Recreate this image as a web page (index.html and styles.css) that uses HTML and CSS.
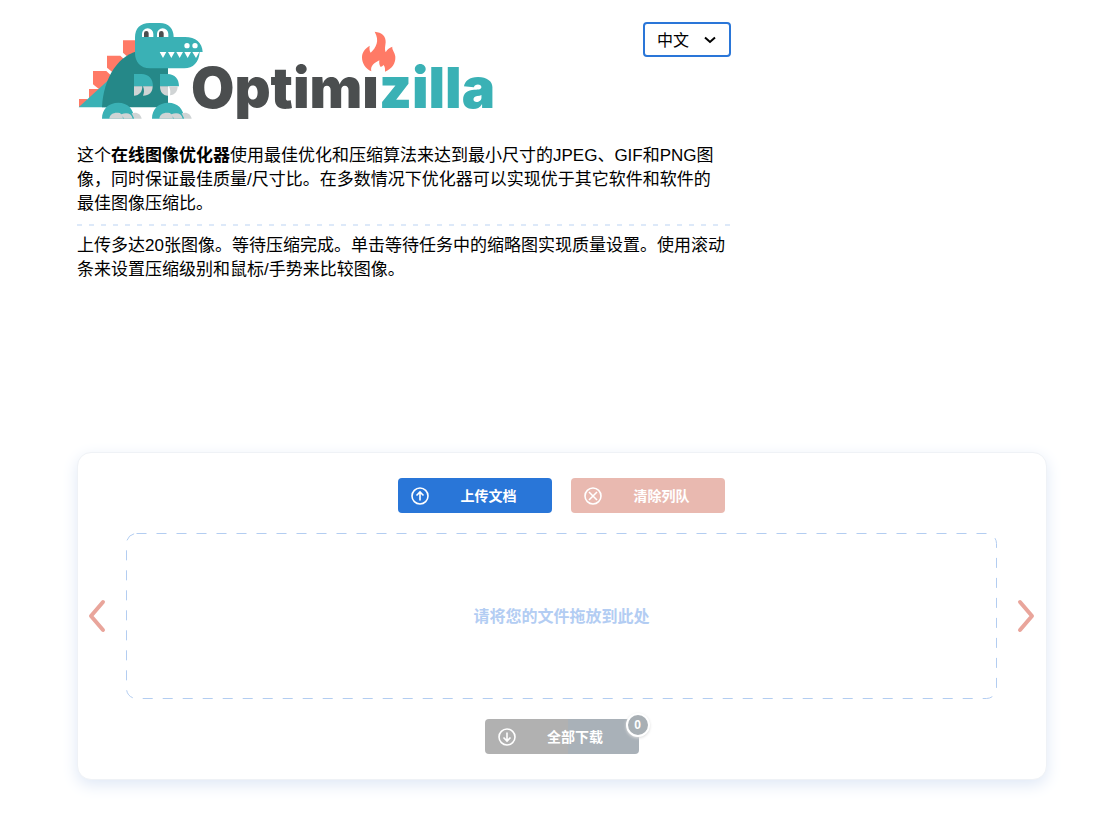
FILE: index.html
```html
<!DOCTYPE html>
<html lang="zh-CN">
<head>
<meta charset="utf-8">
<meta name="viewport" content="width=device-width, initial-scale=1">
<title>Optimizilla</title>
<link rel="stylesheet" href="styles.css">
</head>
<body>
<main class="page">
  <div class="top">
    <div class="intro">
      <header class="header">
        <a class="logo" href="#" aria-label="Optimizilla">
          <svg width="420" height="100" viewBox="77 20 420 100">
            <g transform="translate(70 15) scale(.33333)">
              <g fill="#ff7a66">
                <path d="M159 76h40v55h-20l-20-18z"/>
                <path d="M111 122h40l14 13-30 43-24-20z"/>
                <path d="M69 168h40l15 14-30 46-25-20z"/>
                <path d="M57 222h32v28H57z"/>
                <path d="M27 252h25v24H27z"/>
              </g>
              <path fill="#3ab1b5" d="M26 277 126 185v92z"/>
              <path fill="#258888" d="M96 277C100 190 145 116 215 106l79 30v141z"/>
              <path fill="#3ab1b5" d="M239 24h30c28 0 42 18 42 42h34c32 0 52 17 53 45h-9c-2 31-20 49-46 49H240c-29 0-45-20-45-46V67c0-27 16-43 44-43z"/>
              <path fill="#fff" d="M216 66V57a17 17 0 0 1 34 0v9zM261 66V57a17 17 0 0 1 34 0v9z"/>
              <path fill="#4b4e4f" d="M222 66V55a7 7 0 0 1 14 0v11zM267 66V55a7 7 0 0 1 14 0v11z"/>
              <circle cx="351" cy="92" r="8" fill="#fff"/><circle cx="375" cy="92" r="8" fill="#fff"/>
              <path fill="#fff" d="M269 111h20l-10 18zM294 111h20l-10 18zM319 111h20l-10 18zM343 111h20l-10 18zM367 111h21l-10 18z"/>
              <path fill="#3ab1b5" d="M192 177h22c23 0 35 15 35 37h-57zM270 177h22c23 0 35 15 35 37h-57z"/>
              <path fill="#d0d4d5" d="M192 214h25c0 17-9 28-25 28zM219 214h29c0 18-10 28-29 28 4-9 4-17 0-28zM270 214h24v28c-16 0-24-11-24-28zM297 214h26c0 15-8 26-23 27 2-9 1-17-3-27z"/>
              <path fill="#3ab1b5" d="M96 311c0-29 20-48 49-48 28 0 46 19 48 48zM246 311c0-29 20-48 49-48 28 0 46 19 48 48z"/>
              <path fill="#d0d4d5" d="M118 311c2-14 14-20 31-17 7 4 9 9 10 17zM154 298c17-7 31-2 34 13h-26zM185 295c16-5 27 2 30 16h-22zM268 311c2-14 14-20 31-17 7 4 9 9 10 17zM304 298c17-7 31-2 34 13h-26zM335 295c16-5 27 2 30 16h-22z"/>
            </g>
            <text class="wordmark" x="191" y="108">Optimi<tspan class="wordmark-accent">zilla</tspan></text>
            <path fill="#fff" d="M361 58h20v17h-20z"/>
            <path fill="#ff7a66" transform="translate(350 25) scale(.33333)" d="M74 20c22 2 34 14 33 32-1 12-4 20 0 30 4-8 10-13 20-17-2 9 8 17 9 30 1 20-10 36-31 45 0-8 1-13-4-20-3 3-6 5-9 6-4-5-5-12-4-20-14 7-28 16-24 33-18-8-28-24-28-42 0-14 8-26 23-35-1 8-1 15 3 21 16-15 28-35 12-63z"/>
          </svg>
        </a>
        <div class="language">
          <select class="language-select" aria-label="语言"><option>中文</option></select>
          <svg class="language-arrow" width="12" height="8" viewBox="0 0 12 8"><path d="M1 1.500 6 6l5-4.500"/></svg>
        </div>
      </header>
      <p class="lead">这个<b>在线图像优化器</b>使用最佳优化和压缩算法来达到最小尺寸的JPEG、GIF和PNG图像，同时保证最佳质量/尺寸比。在多数情况下优化器可以实现优于其它软件和软件的最佳图像压缩比。</p>
      <p class="steps">上传多达20张图像。等待压缩完成。单击等待任务中的缩略图实现质量设置。使用滚动条来设置压缩级别和鼠标/手势来比较图像。</p>
    </div>
  </div>

  <section class="panel">
    <div class="actions">
      <button class="button button-upload" type="button">
        <svg class="button-icon" viewBox="0 0 18 18"><circle cx="9" cy="9" r="8"/><path d="M9 13.500V5.500M5.500 8.500 9 5l3.500 3.500"/></svg>
        <span class="button-label">上传文档</span>
      </button>
      <button class="button button-clear" type="button">
        <svg class="button-icon" viewBox="0 0 18 18"><circle cx="9" cy="9" r="8"/><path d="m5 5 8 8m0-8-8 8"/></svg>
        <span class="button-label">清除列队</span>
      </button>
    </div>
    <div class="queue">
      <button class="arrow" type="button" aria-label="上一个"><svg width="18" height="34" viewBox="0 0 18 34"><path d="M15 3 3 17l12 14"/></svg></button>
      <div class="dropzone">
        <svg class="dropzone-outline"><rect class="dropzone-rect" x=".5" y=".5" rx="10"/></svg>
        <span>请将您的文件拖放到此处</span>
      </div>
      <button class="arrow" type="button" aria-label="下一个"><svg width="18" height="34" viewBox="0 0 18 34"><path d="m3 3 12 14L3 31"/></svg></button>
    </div>
    <div class="actions">
      <button class="button button-download" type="button">
        <svg class="button-icon" viewBox="0 0 18 18"><circle cx="9" cy="9" r="8"/><path d="M9 4.500v8M5.500 9.500 9 13l3.500-3.500"/></svg>
        <span class="button-label">全部下载</span>
        <span class="badge">0</span>
      </button>
    </div>
  </section>
</main>
</body>
</html>
```
FILE: styles.css
```css
* {
  box-sizing: border-box;
}

body {
  margin: 0;
  background: #fff;
  color: #000;
  font-family: "Liberation Sans", "Noto Sans CJK SC", sans-serif;
  font-size: 17px;
  line-height: 24px;
}

.page {
  padding: 20px 63px 36px 77px;
}

.top {
  display: grid;
  grid-template-columns: minmax(0, 1fr) 300px;
  gap: 16px;
  min-height: 432px;
}

.header {
  display: flex;
  justify-content: space-between;
  align-items: flex-start;
  margin-bottom: 24px;
}

.logo svg {
  display: block;
  overflow: visible;
}

.wordmark {
  font-family: Inter, sans-serif;
  font-size: 56px;
  font-weight: 900;
  fill: #4b4e4f;
}

.wordmark-accent {
  fill: #3ab1b5;
}

.language {
  position: relative;
  margin-top: 2px;
}

.language-select {
  appearance: none;
  display: block;
  width: 88px;
  height: 35px;
  padding: 2px 12px 0;
  border: 2px solid #2a76d8;
  border-radius: 4px;
  background: #fff;
  color: #000;
  font: inherit;
  font-size: 16px;
}

.language-arrow {
  position: absolute;
  top: 14px;
  right: 15px;
  fill: none;
  stroke: #000;
  stroke-width: 2;
  pointer-events: none;
}

.lead,
.steps {
  margin: 0;
}

.lead {
  padding: 0 8px 10px 0;
  background: repeating-linear-gradient(90deg, #dde9f9 0 5px, transparent 5px 12px) bottom / 100% 2px no-repeat;
}

.steps {
  padding-top: 8px;
}

.panel {
  display: grid;
  gap: 20px;
  padding: 25px 11px 25px 10px;
  border: 1px solid #eff2f6;
  border-radius: 14px;
  background: #fff;
  box-shadow: 0 5px 16px #dfe8f6;
}

.actions {
  display: flex;
  justify-content: center;
  gap: 19px;
}

.button {
  position: relative;
  display: flex;
  align-items: center;
  width: 154px;
  height: 35px;
  padding: 0 4px 0 13px;
  border: 0;
  border-radius: 4px;
  color: #fff;
  font: inherit;
  font-size: 14px;
  font-weight: 700;
}

.button-upload {
  background: #2976d8;
}

.button-clear {
  background: #e9b9b0;
}

.button-download {
  background: linear-gradient(90deg, #b1b1b1 54%, #a9b1b8 54%);
}

.button-icon {
  width: 18px;
  height: 18px;
  fill: none;
  stroke: #fff;
  stroke-width: 1.6;
}

.button-label {
  flex: 1;
  padding-top: 1px;
  text-align: center;
}

.badge {
  position: absolute;
  top: -6px;
  right: -11px;
  width: 24px;
  height: 24px;
  border: 2px solid #fff;
  border-radius: 50%;
  background: #a8afb4;
  box-shadow: 0 1px 3px #dddddd;
  font-size: 12px;
  line-height: 20px;
  text-align: center;
}

.queue {
  display: flex;
  align-items: center;
  justify-content: space-between;
  gap: 20px;
}

.arrow {
  padding: 0;
  border: 0;
  background: none;
}

.arrow svg {
  display: block;
  fill: none;
  stroke: #e9a59b;
  stroke-width: 4;
  stroke-linecap: round;
  stroke-linejoin: round;
}

.dropzone {
  position: relative;
  display: flex;
  flex: 1;
  align-items: center;
  justify-content: center;
  min-height: 166px;
  padding-top: 2px;
  color: #b3cdf3;
  font-size: 16px;
  font-weight: 700;
}

.dropzone-outline {
  position: absolute;
  inset: 0;
  width: 100%;
  height: 100%;
  fill: none;
  stroke: #b3cdf1;
  stroke-dasharray: 10;
}

.dropzone-rect {
  width: calc(100% - 1px);
  height: calc(100% - 1px);
}
```
